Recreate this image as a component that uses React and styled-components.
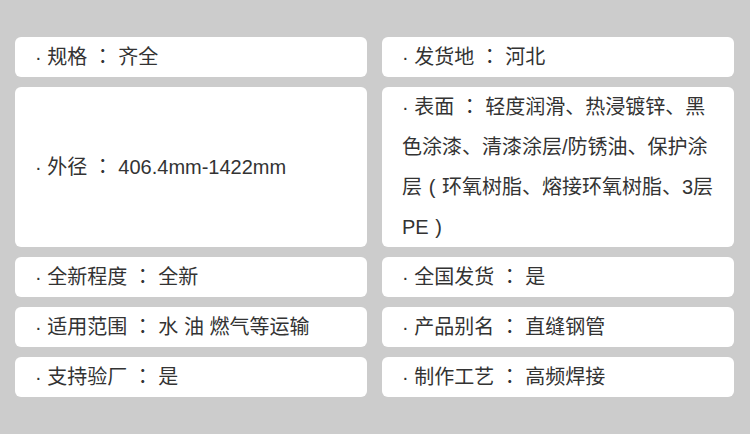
import React from 'react'
import styled, { createGlobalStyle } from 'styled-components'

const GlobalStyle = createGlobalStyle`
  html, body {
    margin: 0;
    padding: 0;
    background: #cccccc;
  }
  body {
    font-family: "Liberation Sans", "Noto Sans CJK SC", sans-serif;
  }
`

const specs = [
  { label: '规格', value: '齐全' },
  { label: '发货地', value: '河北' },
  { label: '外径', value: '406.4mm-1422mm' },
  { label: '表面', value: '轻度润滑、热浸镀锌、黑色涂漆、清漆涂层/防锈油、保护涂层（环氧树脂、熔接环氧树脂、3层PE）' },
  { label: '全新程度', value: '全新' },
  { label: '全国发货', value: '是' },
  { label: '适用范围', value: '水 油 燃气等运输' },
  { label: '产品别名', value: '直缝钢管' },
  { label: '支持验厂', value: '是' },
  { label: '制作工艺', value: '高频焊接' },
]

const Page = styled.div`
  width: 750px;
  height: 434px;
  box-sizing: border-box;
  padding: 37px 16px 37px 15px;
  background: #cccccc;
`

const Grid = styled.div`
  display: grid;
  grid-template-columns: 1fr 1fr;
  column-gap: 15px;
  row-gap: 10px;
`

const Card = styled.div`
  display: flex;
  align-items: center;
  min-height: 40px;
  padding: 0 16px 0 20px;
  background: #ffffff;
  border-radius: 6px;
  font-size: 20px;
  line-height: 40px;
  color: #333333;
`

const Text = styled.div`
  word-break: break-all;
`

// centred full-width colon, as the reference font draws it
const Colon = styled.span`
  font-family: "Noto Sans CJK TC", sans-serif;
  line-height: 1;
`

// full-width bracket: a thin paren centred in a 1em cell
const Paren = styled.span`
  display: inline-block;
  width: 1em;
  text-align: center;
  line-height: 1;
  font-family: "Liberation Sans", sans-serif;
`

const withPunct = (str) =>
  str.split(/([（）])/).map((part, i) => {
    if (part === '（') return <Paren key={i}>(</Paren>
    if (part === '）') return <Paren key={i}>)</Paren>
    return part
  })

export default function App() {
  return (
    <Page>
      <GlobalStyle />
      <Grid>
        {specs.map((s) => (
          <Card key={s.label}>
            <Text>
              · {s.label} <Colon>：</Colon> {withPunct(s.value)}
            </Text>
          </Card>
        ))}
      </Grid>
    </Page>
  )
}
